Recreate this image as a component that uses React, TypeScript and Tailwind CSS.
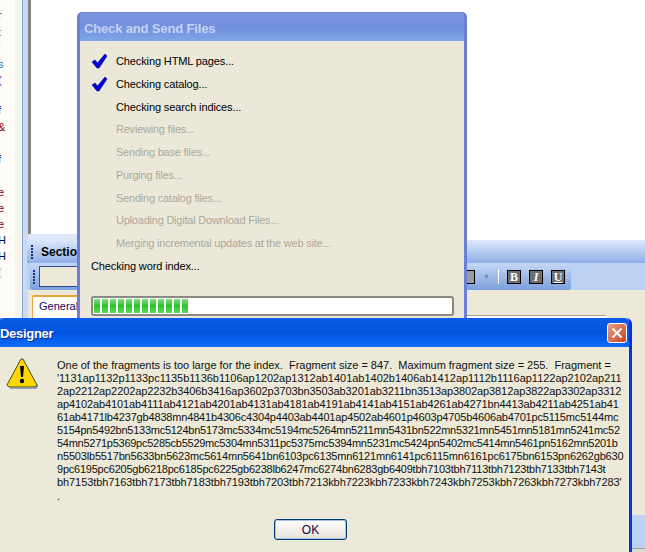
// tracking differs per line so each one ends where the original Tahoma line does
const fragmentLines = [
  { text: "'1131ap1132p1133pc1135b1136b1106ap1202ap1312ab1401ab1402b1406ab1412ap1112b1116ap1122ap2102ap211", tracking: "tracking-[-0.022px]" },
  { text: "2ap2212ap2202ap2232b3406b3416ap3602p3703bn3503ab3201ab3211bn3513ap3802ap3812ap3822ap3302ap3312", tracking: "tracking-[-0.105px]" },
  { text: "ap4102ab4101ab4111ab4121ab4201ab4131ab4181ab4191ab4141ab4151ab4261ab4271bn4413ab4211ab4251ab41", tracking: "tracking-[-0.116px]" },
  { text: "61ab4171lb4237gb4838mn4841b4306c4304p4403ab4401ap4502ab4601p4603p4705b4606ab4701pc5115mc5144mc", tracking: "tracking-[-0.17px]" },
  { text: "5154pn5492bn5133mc5124bn5173mc5334mc5194mc5264mn5211mn5431bn522mn5321mn5451mn5181mn5241mc52", tracking: "tracking-[-0.258px]" },
  { text: "54mn5271p5369pc5285cb5529mc5304mn5311pc5375mc5394mn5231mc5424pn5402mc5414mn5461pn5162mn5201b", tracking: "tracking-[-0.267px]" },
  { text: "n5503lb5517bn5633bn5623mc5614mn5641bn6103pc6135mn6121mn6141pc6115mn6161pc6175bn6153pn6262gb630", tracking: "tracking-[-0.18px]" },
  { text: "9pc6195pc6205gb6218pc6185pc6225gb6238lb6247mc6274bn6283gb6409tbh7103tbh7113tbh7123tbh7133tbh7143t", tracking: "tracking-[-0.228px]" },
  { text: "bh7153tbh7163tbh7173tbh7183tbh7193tbh7203tbh7213kbh7223kbh7233kbh7243kbh7253kbh7263kbh7273kbh7283'", tracking: "tracking-[-0.085px]" },
]

const steps = [
  { label: "Checking HTML pages...", done: true, active: true },
  { label: "Checking catalog...", done: true, active: true },
  { label: "Checking search indices...", done: false, active: true },
  { label: "Reviewing files...", done: false, active: false },
  { label: "Sending base files...", done: false, active: false },
  { label: "Purging files...", done: false, active: false },
  { label: "Sending catalog files...", done: false, active: false },
  { label: "Uploading Digital Download Files...", done: false, active: false },
  { label: "Merging incremental updates at the web site...", done: false, active: false },
]

// the letters of the page behind, cut off by the left edge of the shot
const gutterChars = [
  { c: "r", y: 10, color: "text-[#603080]" },
  { c: "t", y: 27, color: "text-[#a08020]" },
  { c: "i", y: 42, color: "text-[#800060]" },
  { c: "s", y: 59, color: "text-[#2080c0]" },
  { c: "(", y: 75, color: "text-[#800080]" },
  { c: "f", y: 105, color: "text-[#200060]" },
  { c: "&", y: 122, color: "text-[#900000]" },
  { c: "f", y: 154, color: "text-[#200060]" },
  { c: "e", y: 187, color: "text-[#800000]" },
  { c: "e", y: 203, color: "text-[#800000]" },
  { c: "e", y: 219, color: "text-[#800000]" },
  { c: "H", y: 235, color: "text-[#000060]" },
  { c: "H", y: 251, color: "text-[#000060]" },
  { c: "(", y: 267, color: "text-[#c0b8a0]" },
]

function CheckMark() {
  return (
    <svg width="17" height="16" viewBox="0 0 17 16" className="shrink-0">
      <path d="M1 9 L4 7 L6.5 10 L14 1 L16 3 L8 15 L6 15 Z" fill="#0000e0" stroke="#000080" strokeWidth="0.6" />
    </svg>
  )
}

function Grip() {
  return (
    <div className="flex w-[3px] flex-col gap-[1px]">
      {[0, 1, 2, 3, 4].map((i) => (
        <div key={i} className="h-[2px] w-[2px] bg-[#1a2f6e]" />
      ))}
    </div>
  )
}

function FormatButton({ label, className }: { label: string; className: string }) {
  return (
    <div className={`flex h-[14px] w-[14px] items-center justify-center border border-black bg-[#6f6f6f] text-[12px] leading-none font-bold text-white ${className}`}>
      {label}
    </div>
  )
}

function Background() {
  return (
    <div className="absolute inset-0 bg-white">
      <div className="absolute top-0 left-0 h-[318px] w-[15px] bg-[#fdfcf6]" />
      <div className="absolute top-0 left-[15px] h-[318px] w-[7px] bg-[#f6f4eb]" />
      {gutterChars.map((g) => (
        <span key={g.y} style={{ top: g.y }} className={`absolute left-[-2px] text-[11px] leading-none ${g.color}`}>
          {g.c}
        </span>
      ))}
      <div className="absolute top-0 left-[22px] h-[318px] w-[6px] border-l border-[#8fa6cc] bg-[#c9daf7]" />
      <div className="absolute top-0 left-[28px] h-[237px] w-[3px] bg-[#87857a]" />
      <div className="absolute top-[234px] left-[28px] h-[6px] w-[50px] bg-[#dbe6f9]" />
      {/* section bar */}
      <div className="absolute top-[240px] right-0 left-[27px] flex h-[23px] items-center gap-[7px] bg-gradient-to-b from-[#dde8fb] to-[#8fb0e6] pl-[4px]">
        <Grip />
        <span className="text-[12px] font-bold text-black">Section</span>
      </div>
      {/* light strip behind the toolbar */}
      <div className="absolute top-[263px] right-0 left-[27px] h-[27px] bg-[#bcd2f5]" />
      <div className="absolute top-[263px] left-[30px] flex h-[27px] w-[541px] items-center justify-between rounded-[3px] bg-gradient-to-b from-[#c6d9f7] to-[#7b9fdc] pr-[6px] pl-[3px]">
        <div className="flex items-center gap-[3px]">
          <Grip />
          <div className="h-[21px] w-[40px] border border-[#2f4a8f] bg-[#ece9d8]" />
        </div>
        <div className="flex items-center gap-[8px]">
          <div className="h-[14px] w-[12px] border-y border-r border-black bg-[#9c9c9c]" />
          <span className="text-[7px] leading-none text-[#6a8ac4]">▼</span>
          <div className="h-[15px] w-px bg-white" />
          <FormatButton label="B" className="font-['Liberation_Serif',serif]" />
          <FormatButton label="I" className="font-['Liberation_Serif',serif] italic" />
          <FormatButton label="U" className="font-['Liberation_Serif',serif] underline" />
        </div>
      </div>
      {/* tab area */}
      <div className="absolute top-[290px] right-0 bottom-0 left-[28px] bg-[#ece9d8]" />
      <div className="absolute top-[295px] left-[32px] h-[30px] w-[60px] rounded-t-[2px] border-t-2 border-l border-[#e8a33d] bg-white pt-[1px] pl-[6px] text-[11px] text-[#200060]">
        General
      </div>
      <div className="absolute top-[315px] left-[467px] h-[5px] w-[139px] border-t border-[#9d9d92] bg-white" />
      <div className="absolute top-[515px] right-0 bottom-0 left-[632px] bg-[#bcd2f5]" />
      <div className="absolute right-0 bottom-0 left-[632px] h-[4px] border-t border-[#9d9d92] bg-[#dcdcd0]" />
    </div>
  )
}

function CheckWindow() {
  return (
    <div className="absolute top-[12px] left-[77px] flex h-[320px] w-[390px] flex-col rounded-t-[5px] border-x-[3px] border-t border-[#6c7fd8] bg-[#ebe8d9]">
      <div className="flex h-[28px] shrink-0 items-center bg-gradient-to-b from-[#7b95de] via-[#7290dc] to-[#7ea6e8] pt-[3px] pl-[4px] text-[13px] font-bold tracking-[-0.15px] text-[#c4d3f4]">
        Check and Send Files
      </div>
      <div className="flex flex-col pt-[9px] pl-[11px] text-[11px]">
        {steps.map((s) => (
          <div key={s.label} className="flex h-[22.75px] items-center">
            <div className="w-[25px] shrink-0">{s.done && <CheckMark />}</div>
            <span className={s.active ? "tracking-[-0.12px] text-black" : "tracking-[-0.22px] text-[#aca899]"}>{s.label}</span>
          </div>
        ))}
        <div className="flex h-[22.75px] items-center tracking-[-0.12px] text-black">Checking word index...</div>
        <div className="mt-[18px] flex h-[20px] w-[363px] items-center gap-[2px] rounded-[3px] border-2 border-[#8a8a82] bg-white px-[1px]">
          {Array.from({ length: 12 }).map((_, i) => (
            <div key={i} className="h-[14px] w-[6px] bg-gradient-to-b from-[#7fe07f] via-[#22c322] to-[#5fd85f]" />
          ))}
        </div>
      </div>
    </div>
  )
}

function DesignerDialog() {
  return (
    <div className="absolute top-[318px] left-[-4px] flex h-[240px] w-[636px] flex-col rounded-t-[6px] border-x-[3px] border-[#0831d9] bg-[#ece9d8]">
      <div className="flex h-[29px] shrink-0 items-center justify-between rounded-t-[5px] bg-gradient-to-b from-[#0a5be8] via-[#0253e0] to-[#0a6cf5] pr-[2px] pl-[1px]">
        <span className="pt-[3px] text-[13px] font-bold tracking-[-0.3px] text-white [text-shadow:1px_1px_0_#0a2a8f]">Designer</span>
        <div className="flex h-[20px] w-[20px] items-center justify-center rounded-[3px] border border-white bg-gradient-to-br from-[#e8a080] to-[#c8401c]">
          <svg width="12" height="12" viewBox="0 0 12 12">
            <path d="M1.5 1.5 L10.5 10.5 M10.5 1.5 L1.5 10.5" stroke="white" strokeWidth="2" />
          </svg>
        </div>
      </div>
      <div className="flex grow flex-col">
        <div className="flex pt-[11px] pl-[7px]">
          <svg width="32" height="32" viewBox="0 0 32 32" className="shrink-0">
            <path d="M15 1 L17 1 L31 27 L29 29 L3 29 L1 27 Z" fill="#ffd800" stroke="#4a4a20" strokeWidth="1" strokeLinejoin="round" />
            <path d="M4 30 L30 30 L32 27" fill="none" stroke="#7f8aa8" strokeWidth="1.5" />
            <path d="M14 8 L18 8 L17 19 L15 19 Z" fill="#000" />
            <circle cx="16" cy="23" r="2.2" fill="#000" />
          </svg>
          <div className="ml-[19px] flex flex-col pt-[1px] text-[11px] leading-[13px] whitespace-nowrap text-[#111]">
            <div className="tracking-[-0.02px] whitespace-pre">One of the fragments is too large for the index.  Fragment size = 847.  Maximum fragment size = 255.  Fragment =</div>
            {fragmentLines.map((line) => (
              <div key={line.text} className={line.tracking}>{line.text}</div>
            ))}
            <div className="pt-[1px]">.</div>
          </div>
        </div>
        <div className="mt-[16px] flex justify-center pr-[7px]">
          <div className="flex h-[21px] w-[73px] items-center justify-center rounded-[3px] border border-[#003c74] bg-gradient-to-b from-white to-[#e6e3d6] text-[12px] text-[#200040] shadow-[inset_0_0_0_1px_#a9c2ea]">
            OK
          </div>
        </div>
      </div>
    </div>
  )
}

export default function App() {
  return (
    <div className="relative h-[552px] w-[645px] overflow-hidden font-['Liberation_Sans',Arial,sans-serif] text-[12px]">
      <Background />
      <CheckWindow />
      <DesignerDialog />
    </div>
  )
}
